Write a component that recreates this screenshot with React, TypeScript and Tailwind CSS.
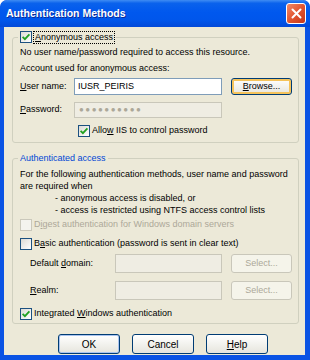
import React from "react";

const U = ({ children }: { children: React.ReactNode }) => (
  <span className="underline underline-offset-[1px] decoration-[1px]">{children}</span>
);

function Check({ checked, disabled }: { checked?: boolean; disabled?: boolean }) {
  return (
    <span
      className={
        disabled
          ? "w-[12px] h-[12px] border border-[#CAC8BB] bg-[#F4F3EE] flex items-center justify-center shrink-0"
          : "w-[12px] h-[12px] border border-[#1C5180] bg-gradient-to-br from-[#DCDBD5] to-white flex items-center justify-center shrink-0"
      }
    >
      {checked && (
        <svg width="10" height="10" viewBox="0 0 10 10">
          <path d="M1.6 4.8 L3.9 7.1 L8.4 2.3" stroke="#21A121" strokeWidth="1.8" fill="none" />
        </svg>
      )}
    </span>
  );
}

function Btn({
  children,
  kind = "normal",
  className = "",
}: {
  children: React.ReactNode;
  kind?: "normal" | "focus" | "default" | "disabled";
  className?: string;
}) {
  const base = "flex items-center justify-center rounded-[3px] border shrink-0 ";
  const styles =
    kind === "disabled"
      ? "border-[#C9C7BA] bg-[#F5F4EA] text-[#ACA899]"
      : kind === "focus"
      ? "border-[#003C74] bg-gradient-to-b from-white to-[#E6E5DD] shadow-[inset_0_0_0_2px_#F5C35B]"
      : kind === "default"
      ? "border-[#003C74] bg-gradient-to-b from-white to-[#E6E5DD] shadow-[inset_0_0_0_1px_#A9C3EF]"
      : "border-[#003C74] bg-gradient-to-b from-white to-[#E6E5DD]";
  return <div className={base + styles + " " + className}>{children}</div>;
}

export default function App() {
  return (
    <div className="w-[310px] h-[360px] bg-[#0A53E4] rounded-t-[7px] flex flex-col font-['Liberation_Sans',Arial,sans-serif] text-[9px] text-black overflow-hidden">
      {/* Title bar */}
      <div className="h-[27px] shrink-0 flex items-center justify-between pl-[6px] pr-[4px] rounded-t-[7px] bg-[linear-gradient(to_bottom,#3F8CF3_0%,#0A62EC_12%,#0058EE_45%,#0056EB_75%,#0349D8_100%)]">
        <span className="text-white font-bold text-[10.5px] leading-none [text-shadow:1px_1px_0_#0A2C9A]">
          Authentication Methods
        </span>
        <div className="w-[20px] h-[21px] rounded-[3px] border border-white bg-gradient-to-br from-[#F08A6A] via-[#E2552F] to-[#C5361A] flex items-center justify-center">
          <svg width="11" height="11" viewBox="0 0 11 11">
            <path d="M1.5 1.5 L9.5 9.5 M9.5 1.5 L1.5 9.5" stroke="white" strokeWidth="2" strokeLinecap="round" />
          </svg>
        </div>
      </div>

      {/* Body */}
      <div className="flex-1 ml-[4px] mr-[5px] mb-[5px] bg-[#ECE9D8] flex flex-col pl-[8px] pr-[6px]">
        {/* Group 1 */}
        <div className="mt-[10px] border border-[#D0D0BF] rounded-[3px] pl-[7px] pr-[6px] pb-[5px] flex flex-col">
          <div className="-mt-[8px] h-[14px] flex items-center">
            <div className="-ml-[2px] pl-[2px] pr-[2px] bg-[#ECE9D8] flex items-center gap-[2px] h-[14px]">
              <Check checked />
              <span className="outline outline-1 outline-dotted outline-black px-[1px] leading-[11px]">
                <U>A</U>nonymous access
              </span>
            </div>
          </div>
          <div className="mt-[2px] h-[12px] leading-[12px]">No user name/password required to access this resource.</div>
          <div className="mt-[4px] h-[12px] leading-[12px]">Account used for anonymous access:</div>
          <div className="mt-[4px] h-[17px] flex items-center">
            <span className="w-[54px]">
              <U>U</U>ser name:
            </span>
            <div className="w-[148px] h-[17px] border border-[#7F9DB9] bg-white px-[3px] flex items-center">IUSR_PEIRIS</div>
            <Btn kind="focus" className="ml-auto w-[61px] h-[17px]">
              <span>
                <U>B</U>rowse...
              </span>
            </Btn>
          </div>
          <div className="mt-[7px] h-[16px] flex items-center">
            <span className="w-[54px]">
              <U>P</U>assword:
            </span>
            <div className="w-[148px] h-[16px] border border-[#C9C7BA] bg-[#EFEDE3] px-[4px] flex items-center text-[#ACA899] tracking-[1.5px] text-[8px]">
              ●●●●●●●●●●
            </div>
          </div>
          <div className="mt-[7px] h-[12px] pl-[58px] flex items-center gap-[2px]">
            <Check checked />
            <span>
              Allo<U>w</U> IIS to control password
            </span>
          </div>
        </div>

        {/* Group 2 */}
        <div className="mt-[15px] border border-[#D0D0BF] rounded-[3px] pl-[7px] pr-[6px] pb-[3px] flex flex-col">
          <div className="-mt-[8px] h-[14px] flex items-center">
            <span className="-ml-[2px] px-[2px] bg-[#ECE9D8] text-[#0046D5] leading-[14px]">Authenticated access</span>
          </div>
          <div className="mt-[3px] leading-[12px]">
            <div>For the following authentication methods, user name and password</div>
            <div>are required when</div>
            <div className="pl-[35px]">- anonymous access is disabled, or</div>
            <div className="pl-[35px]">- access is restricted using NTFS access control lists</div>
          </div>
          <div className="mt-[3px] h-[12px] flex items-center gap-[2px]">
            <Check disabled />
            <span className="text-[#ACA899]">
              D<U>i</U>gest authentication for Windows domain servers
            </span>
          </div>
          <div className="mt-[7px] h-[12px] flex items-center gap-[2px]">
            <Check />
            <span>
              B<U>a</U>sic authentication (password is sent in clear text)
            </span>
          </div>
          <div className="mt-[4px] h-[19px] pl-[10px] flex items-center">
            <span className="w-[85px]">
              Default <U>d</U>omain:
            </span>
            <div className="w-[107px] h-[19px] border border-[#C9C7BA] bg-[#EFEDE3]" />
            <Btn kind="disabled" className="ml-auto w-[61px] h-[19px]">
              <span>Select...</span>
            </Btn>
          </div>
          <div className="mt-[8px] h-[19px] pl-[10px] flex items-center">
            <span className="w-[85px]">
              <U>R</U>ealm:
            </span>
            <div className="w-[107px] h-[19px] border border-[#C9C7BA] bg-[#EFEDE3]" />
            <Btn kind="disabled" className="ml-auto w-[61px] h-[19px]">
              <span>Select...</span>
            </Btn>
          </div>
          <div className="mt-[8px] h-[12px] flex items-center gap-[2px]">
            <Check checked />
            <span>
              Integrated <U>W</U>indows authentication
            </span>
          </div>
        </div>

        {/* Buttons */}
        <div className="mt-[10px] ml-[46px] flex gap-[12px]">
          <Btn kind="default" className="w-[62px] h-[20px]">
            <span className="text-[10px]">OK</span>
          </Btn>
          <Btn className="w-[62px] h-[20px]">
            <span className="text-[10px]">Cancel</span>
          </Btn>
          <Btn className="w-[62px] h-[20px]">
            <span className="text-[10px]">
              <U>H</U>elp
            </span>
          </Btn>
        </div>
      </div>
    </div>
  );
}
